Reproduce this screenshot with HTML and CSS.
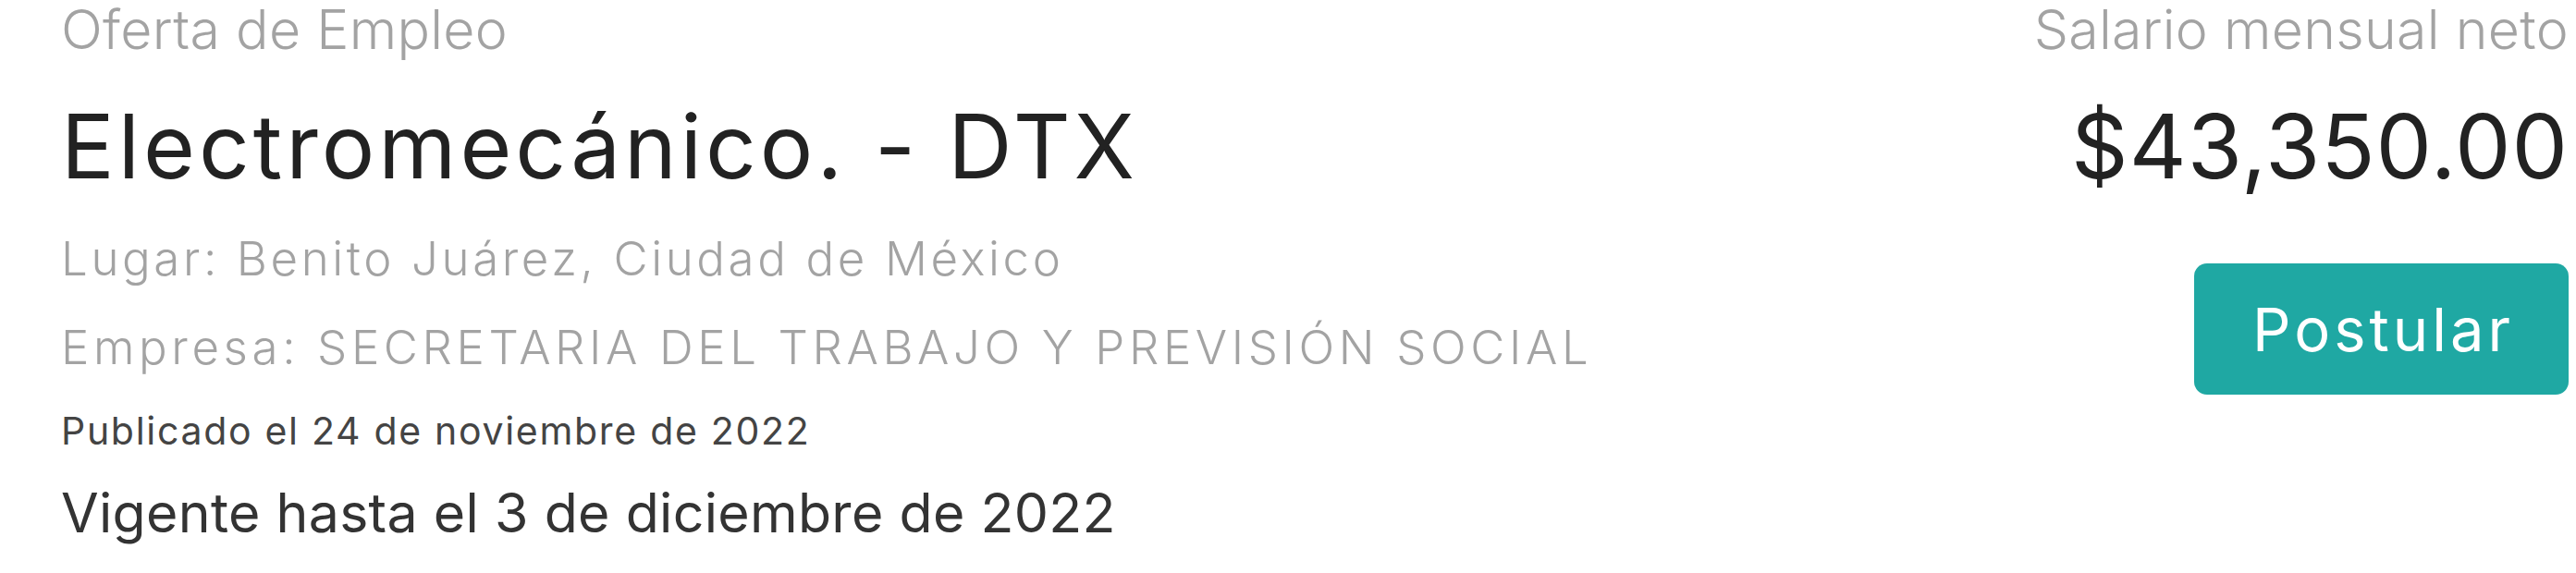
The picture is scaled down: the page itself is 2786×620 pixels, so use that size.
FILE: index.html
```html
<!DOCTYPE html>
<html lang="es">
<head>
<meta charset="utf-8">
<title>Oferta de Empleo</title>
<link rel="stylesheet" href="styles.css">
</head>
<body>
<div class="job">
  <div class="info">
    <div class="label">Oferta de Empleo</div>
    <h1 class="title">Electromecánico. - DTX</h1>
    <div class="meta">Lugar: Benito Juárez, Ciudad de México</div>
    <div class="meta meta-company">Empresa: SECRETARIA DEL TRABAJO Y PREVISIÓN SOCIAL</div>
    <div class="published">Publicado el 24 de noviembre de 2022</div>
    <div class="valid">Vigente hasta el 3 de diciembre de 2022</div>
  </div>
  <div class="side">
    <div class="label">Salario mensual neto</div>
    <div class="salary">$43,350.00</div>
    <button class="apply" type="button">Postular</button>
  </div>
</div>
</body>
</html>
```

FILE: styles.css
```css
html, body {
  margin: 0;
  padding: 0;
  background: #ffffff;
}

body {
  font-family: "Inter", "Open Sans", "DejaVu Sans", sans-serif;
  color: #222222;
}

.job {
  display: flex;
  justify-content: space-between;
  align-items: flex-start;
  padding: 0 8px 0 66px;
}

.info, .side {
  display: flex;
  flex-direction: column;
}

.side {
  align-items: flex-end;
}

.label {
  font-size: 59px;
  line-height: 64px;
  font-weight: 300;
  color: #a3a3a3;
  letter-spacing: 0.3px;
}

.title, .salary {
  margin: 34px 0 0;
  font-size: 96px;
  line-height: 120px;
  font-weight: 400;
  color: #222222;
}

.title {
  letter-spacing: 4px;
}

.salary {
  letter-spacing: 1px;
}

.meta {
  font-size: 51px;
  line-height: 96px;
  font-weight: 300;
  color: #a3a3a3;
  letter-spacing: 3.6px;
}

.meta-company {
  letter-spacing: 4.6px;
}

.title + .meta {
  margin-top: 14px;
}

.published {
  margin-top: 12px;
  font-size: 41px;
  line-height: 60px;
  font-weight: 400;
  color: #444444;
  letter-spacing: 1.7px;
}

.valid {
  margin-top: 19px;
  font-size: 59px;
  line-height: 80px;
  font-weight: 400;
  color: #333333;
  letter-spacing: 0.3px;
}

.apply {
  margin-top: 67px;
  width: 405px;
  height: 142px;
  border: none;
  border-radius: 14px;
  background: #1fa8a3;
  color: #ffffff;
  font-family: inherit;
  font-size: 65px;
  font-weight: 400;
  letter-spacing: 4px;
  padding: 0 0 0 4px;
}
```
